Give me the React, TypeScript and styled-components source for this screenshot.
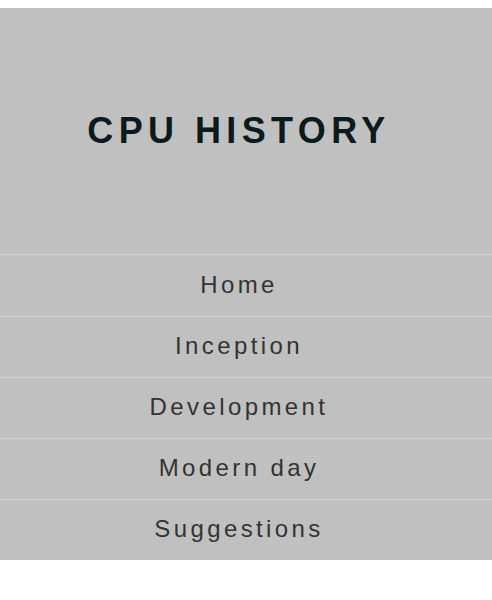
import React from "react";
import styled, { createGlobalStyle } from "styled-components";

const GlobalStyle = createGlobalStyle`
  body {
    margin: 8px 0 0 0;
    background: #fff;
    font-family: "Liberation Sans", Arial, sans-serif;
  }
`;

const Page = styled.div`
  background-color: #c0c0c0;
  border-top: 1px solid #ececec;
  margin-top: -1px;
`;

const Header = styled.header`
  height: 246px;
  display: flex;
  align-items: center;
  justify-content: center;
  padding-right: 14px;
`;

const Title = styled.h1`
  margin: 0;
  font-size: 36px;
  font-weight: bold;
  letter-spacing: 0.15em;
  color: #0b1a1c;
`;

const Nav = styled.nav`
  display: flex;
  flex-direction: column;
`;

const NavItem = styled.a<{ $first?: boolean }>`
  display: flex;
  align-items: center;
  justify-content: center;
  height: ${(p) => (p.$first ? 62 : 61)}px;
  border-top: 1px solid #d4d4d4;
  padding: 0 14px 2px 0;
  box-sizing: border-box;
  font-size: 24px;
  letter-spacing: 3.4px;
  color: #333;
  text-decoration: none;
`;

const items = ["Home", "Inception", "Development", "Modern day", "Suggestions"];

export default function App(): React.ReactElement {
  return (
    <>
      <GlobalStyle />
      <Page>
        <Header>
          <Title>CPU HISTORY</Title>
        </Header>
        <Nav>
          {items.map((label, i) => (
            <NavItem key={label} href="#" $first={i === 0}>
              {label}
            </NavItem>
          ))}
        </Nav>
      </Page>
    </>
  );
}
